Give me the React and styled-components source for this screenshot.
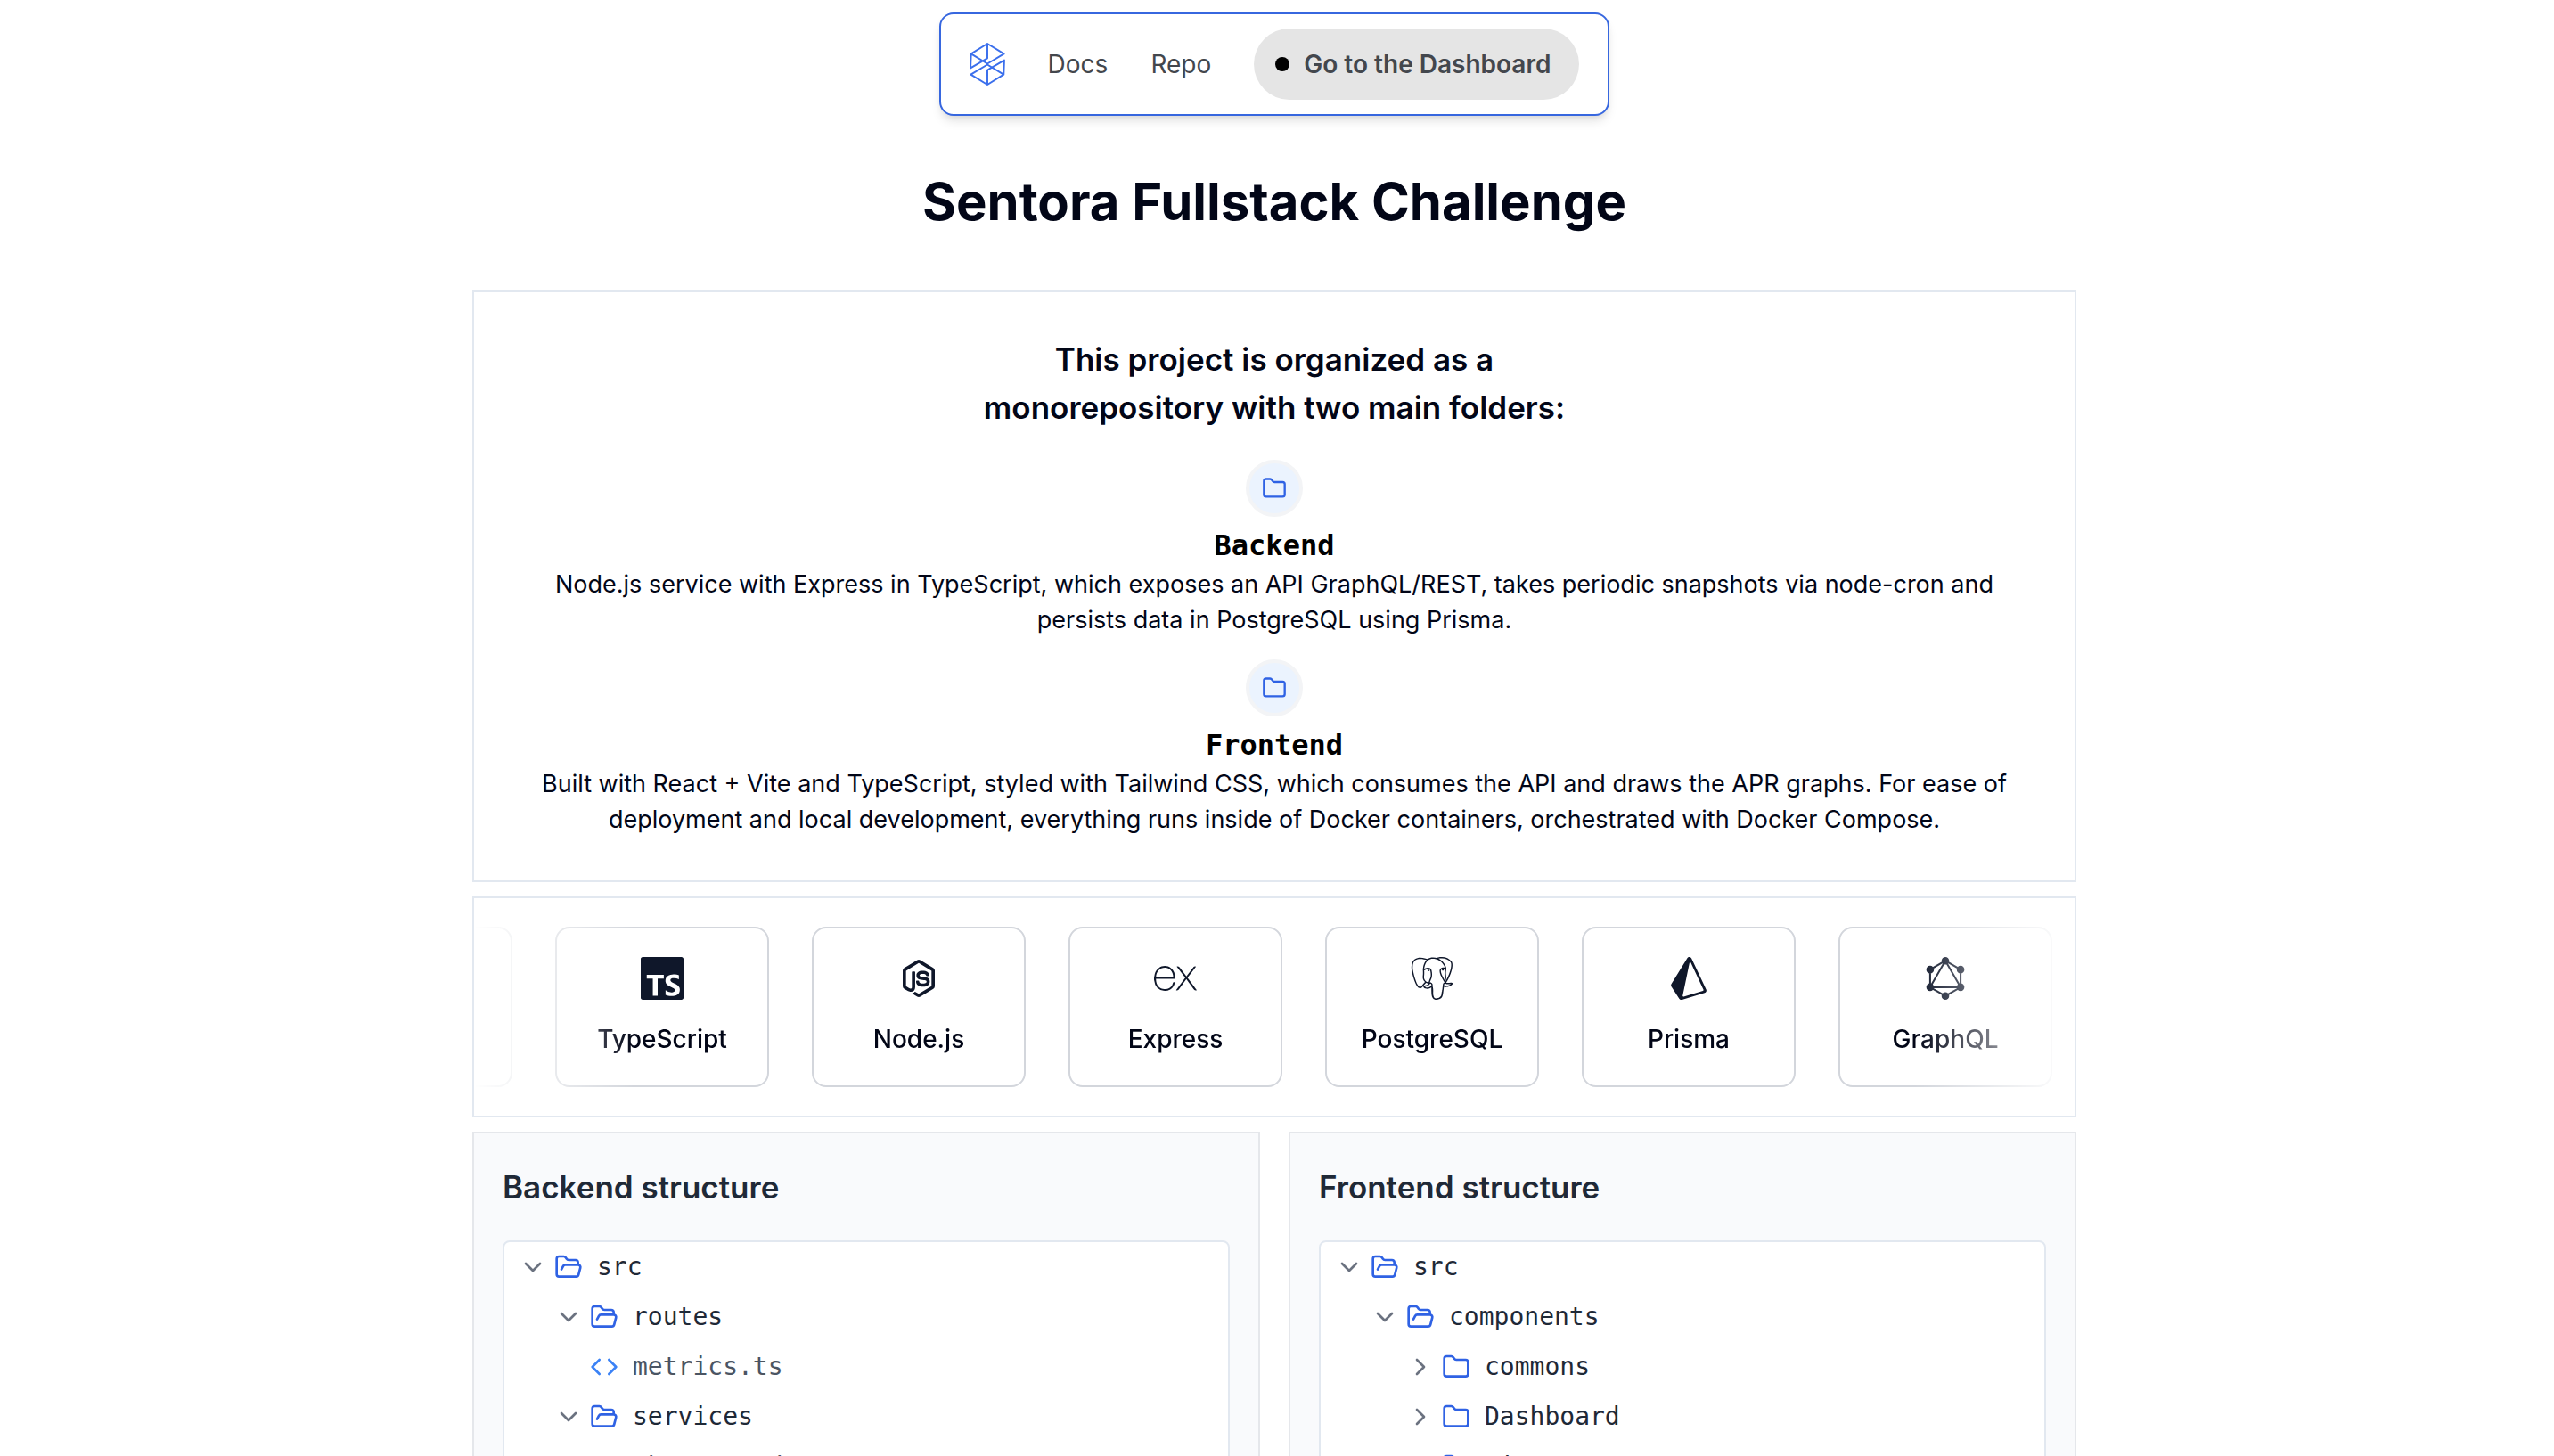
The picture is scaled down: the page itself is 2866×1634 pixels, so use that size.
import React from "react";
import styled, { createGlobalStyle } from "styled-components";
import { ChevronDown, ChevronRight, Code, Folder, FolderOpen } from "lucide-react";
import { SiDocker, SiExpress, SiGraphql, SiPostgresql, SiPrisma, SiReact, SiTypescript } from "react-icons/si";
import { IoLogoNodejs } from "react-icons/io5";

const GlobalStyle = createGlobalStyle`
  * { box-sizing: border-box; margin: 0; padding: 0; }
  body {
    background: #fff;
    color: #020617;
    font-family: Inter, "Liberation Sans", sans-serif;
    font-size: 27px;
    line-height: 40px;
  }
`;

const Page = styled.div`
  height: 100vh;
  overflow: hidden;
  padding: 14px 6px 0 0;
  display: flex;
  flex-direction: column;
  align-items: center;
`;

const Nav = styled.nav`
  display: flex;
  align-items: center;
  gap: 48px;
  padding: 16px 32px;
  border: 2px solid #3767df;
  border-radius: 16px;
  background: #fff;
  box-shadow: 0 8px 12px -2px rgba(0, 0, 0, 0.1), 0 4px 8px -4px rgba(0, 0, 0, 0.1);
  flex-shrink: 0;
`;

const NavLink = styled.a`
  color: #43474d;
  font-size: 28px;
  text-decoration: none;
`;

const DashboardLink = styled(NavLink)`
  display: flex;
  align-items: center;
  gap: 16px;
  height: 80px;
  padding: 0 32px 0 24px;
  border-radius: 40px;
  background: #e5e5e5;
  font-weight: 600;
`;

const Dot = styled.span`
  width: 16px;
  height: 16px;
  border-radius: 50%;
  background: #000;
`;

const Title = styled.h1`
  margin: 62px 0 66px;
  font-size: 58px;
  font-weight: 700;
  line-height: 68px;
`;

const Main = styled.main`
  width: 100%;
  max-width: 1800px;
  display: flex;
  flex-direction: column;
  gap: 16px;
`;

const Card = styled.section`
  border: 2px solid #e2e8f0;
  background: #fff;
`;

const Intro = styled(Card)`
  display: flex;
  flex-direction: column;
  align-items: center;
  gap: 24px;
  padding: 48px 64px;
  text-align: center;
`;

const IntroHeading = styled.h2`
  margin-bottom: 8px;
  font-size: 35px;
  font-weight: 600;
  line-height: 54px;
`;

const Part = styled.div`
  display: flex;
  flex-direction: column;
  align-items: center;
`;

const IconCircle = styled.span`
  display: grid;
  place-items: center;
  width: 64px;
  height: 64px;
  border: 4px solid #f3f4f6;
  border-radius: 50%;
  background: #ebf3fe;
  color: #2f62e4;
`;

const PartName = styled.h3`
  margin-top: 8px;
  color: #000;
  font-family: "DejaVu Sans Mono", monospace;
  font-size: 32px;
  font-weight: 700;
  line-height: 48px;
`;

const Marquee = styled(Card)`
  padding: 32px 0;
`;

const Fade = styled.div`
  overflow: hidden;
  mask-image: linear-gradient(to right, transparent, #000 10%, #000 90%, transparent);
`;

const Track = styled.ul`
  display: flex;
  gap: 48px;
  margin-left: -197px;
  list-style: none;
`;

const Tech = styled.li`
  flex: 0 0 240px;
  height: 180px;
  padding: 32px 0;
  display: flex;
  flex-direction: column;
  align-items: center;
  gap: 24px;
  border: 2px solid #d3d6dc;
  border-radius: 16px;
  font-size: 28px;
  font-weight: 500;

  svg { color: #0f172a; }
`;

const Panels = styled.div`
  display: grid;
  grid-template-columns: 1fr 1fr;
  gap: 32px;
`;

const Panel = styled.section`
  padding: 32px;
  border: 2px solid #e5e7eb;
  background: #f9fafc;
`;

const PanelTitle = styled.h2`
  margin-bottom: 32px;
  color: #1f2937;
  font-size: 35px;
  font-weight: 600;
  line-height: 56px;
`;

const Tree = styled.ul`
  border: 2px solid #e2e8f0;
  border-radius: 8px;
  background: #fff;
  list-style: none;
`;

const Row = styled.button`
  display: flex;
  align-items: center;
  width: 100%;
  height: 56px;
  padding-left: ${(p) => 16 + p.$depth * 40}px;
  gap: 8px;
  border: 0;
  background: none;
  color: ${(p) => (p.$file ? "#4b5563" : "#1f2937")};
  font-family: "DejaVu Sans Mono", monospace;
  font-size: 28px;
  line-height: 40px;

  svg { color: ${(p) => (p.$file ? "#3b82f6" : "#2f62e4")}; }
  svg:nth-last-child(3) { color: #6b7280; }
`;

const RowLabel = styled.span`
  margin-left: 8px;
`;

function Logo() {
  return (
    <svg width="40" height="48" viewBox="56 50 122 147" fill="none" stroke="#3b6fec" strokeWidth="6" strokeLinejoin="round" strokeLinecap="round" aria-label="Sentora">
      <path d="M117 53L61 88L59 137L117 103V53L174 88L117 122L61 88" />
      <path d="M117 194L173 159L175 110L117 144V194L60 159L117 125L173 159" />
    </svg>
  );
}

const techs = [
  ["Docker", SiDocker],
  ["TypeScript", SiTypescript],
  ["Node.js", IoLogoNodejs],
  ["Express", SiExpress],
  ["PostgreSQL", SiPostgresql],
  ["Prisma", SiPrisma],
  ["GraphQL", SiGraphql],
  ["React", SiReact],
];

const backend = [
  { name: "src", depth: 0, kind: "open" },
  { name: "routes", depth: 1, kind: "open" },
  { name: "metrics.ts", depth: 2, kind: "file" },
  { name: "services", depth: 1, kind: "open" },
  { name: "shareSaved.ts", depth: 2, kind: "file" },
];

const frontend = [
  { name: "src", depth: 0, kind: "open" },
  { name: "components", depth: 1, kind: "open" },
  { name: "commons", depth: 2, kind: "closed" },
  { name: "Dashboard", depth: 2, kind: "closed" },
  { name: "ui", depth: 2, kind: "closed" },
];

function TreeRow({ name, depth, kind }) {
  const Icon = { open: FolderOpen, closed: Folder, file: Code }[kind];
  const Chevron = { open: ChevronDown, closed: ChevronRight }[kind];
  return (
    <li>
      <Row type="button" $depth={depth} $file={kind === "file"}>
        {Chevron && <Chevron size={32} />}
        <Icon size={32} />
        <RowLabel>{name}</RowLabel>
      </Row>
    </li>
  );
}

function Structure({ title, rows }) {
  return (
    <Panel>
      <PanelTitle>{title}</PanelTitle>
      <Tree>
        {rows.map((row) => <TreeRow key={row.name} {...row} />)}
      </Tree>
    </Panel>
  );
}

export default function App() {
  return (
    <Page>
      <GlobalStyle />
      <Nav>
        <Logo />
        <NavLink href="#docs">Docs</NavLink>
        <NavLink href="#repo">Repo</NavLink>
        <DashboardLink href="#dashboard">
          <Dot />
          Go to the Dashboard
        </DashboardLink>
      </Nav>
      <Title>Sentora Fullstack Challenge</Title>
      <Main>
        <Intro>
          <IntroHeading>
            This project is organized as a<br />
            monorepository with two main folders:
          </IntroHeading>
          <Part>
            <IconCircle><Folder size={28} /></IconCircle>
            <PartName>Backend</PartName>
            <p>
              Node.js service with Express in TypeScript, which exposes an API GraphQL/REST, takes periodic
              snapshots via node-cron and persists data in PostgreSQL using Prisma.
            </p>
          </Part>
          <Part>
            <IconCircle><Folder size={28} /></IconCircle>
            <PartName>Frontend</PartName>
            <p>
              Built with React + Vite and TypeScript, styled with Tailwind CSS, which consumes the API and draws
              the APR graphs. For ease of deployment and local development, everything runs inside of Docker
              containers, orchestrated with Docker Compose.
            </p>
          </Part>
        </Intro>
        <Marquee>
          <Fade>
            <Track>
              {techs.map(([name, Icon]) => (
                <Tech key={name}>
                  <Icon size={48} />
                  {name}
                </Tech>
              ))}
            </Track>
          </Fade>
        </Marquee>
        <Panels>
          <Structure title="Backend structure" rows={backend} />
          <Structure title="Frontend structure" rows={frontend} />
        </Panels>
      </Main>
    </Page>
  );
}
